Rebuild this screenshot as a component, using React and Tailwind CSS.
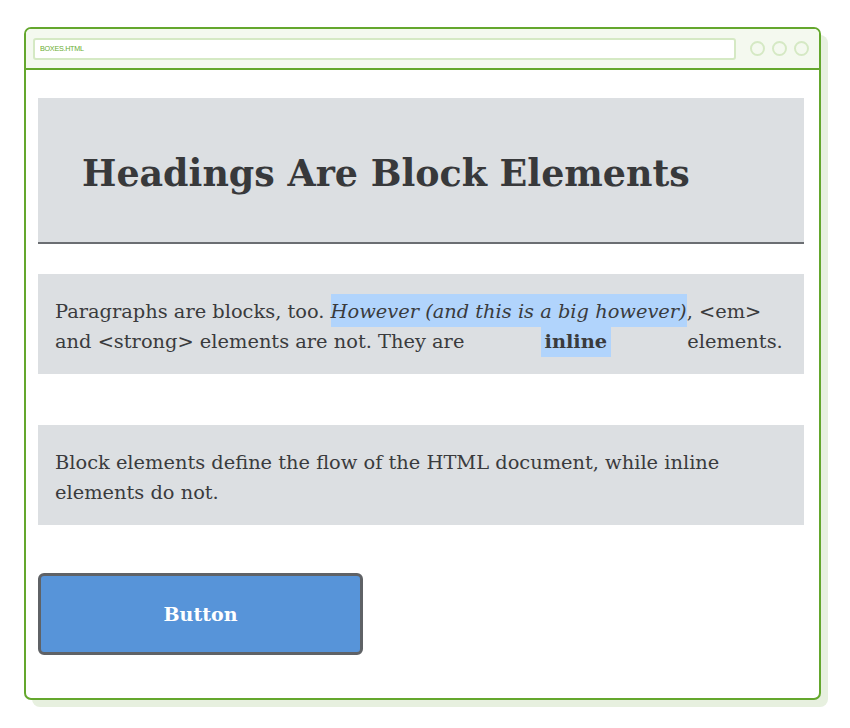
import React from "react";

export default function App() {
  const serif = { fontFamily: '"DejaVu Serif", serif' };
  return (
    <div className="w-[850px] h-[728px] bg-white relative">
      <div className="absolute left-[32px] top-[35px] w-[796px] h-[672px] rounded-[8px] bg-[#e7f0df]" />
      <div className="absolute left-[24px] top-[27px] w-[797px] h-[673px] rounded-[7px] border-2 border-[#64a72d] bg-white flex flex-col overflow-hidden">
        <div className="h-[41px] shrink-0 bg-[#f4f9ef] border-b-2 border-[#64a72d] flex items-center pl-[7px] pr-[10px] gap-[14px]">
          <div className="flex-1 h-[22px] bg-white border-2 border-[#d5e9c4] rounded-[3px] flex items-center pl-[5px]">
            <span className="text-[8px] text-[#6aae2f] tracking-[-0.3px] scale-x-90 origin-left" style={{ fontFamily: '"Liberation Sans", sans-serif' }}>BOXES.HTML</span>
          </div>
          <div className="flex gap-[7px]">
            <div className="w-[15px] h-[15px] rounded-full border-2 border-[#d5e9c4]" />
            <div className="w-[15px] h-[15px] rounded-full border-2 border-[#d5e9c4]" />
            <div className="w-[15px] h-[15px] rounded-full border-2 border-[#d5e9c4]" />
          </div>
        </div>
        <div className="pl-[12px] pr-[15px] pt-[28px] flex flex-col text-[#3a3b3d]" style={serif}>
          <h1 className="h-[146px] bg-[#dcdfe2] border-b-2 border-[#6b6e72] flex items-center pl-[44px] pt-[8px] text-[36.4px] font-bold text-[#38393b]">
            Headings Are Block Elements
          </h1>
          <p className="mt-[30px] h-[100px] bg-[#dcdfe2] px-[17px] pt-[23px] text-[19.4px] leading-[30px]">
            Paragraphs are blocks, too. <em className="bg-[#b1d4fc] pt-[6px] pb-[4px]">However (and this is a big however)</em>, &lt;em&gt; and &lt;strong&gt; elements are not. They are <strong className="bg-[#b1d4fc] px-[4px] py-[4px] mx-[70px]">inline</strong> elements.
          </p>
          <p className="mt-[51px] h-[100px] bg-[#dcdfe2] px-[17px] pt-[23px] text-[19.4px] leading-[30px]">
            Block elements define the flow of the HTML document, while inline elements do not.
          </p>
          <div className="mt-[48px]">
            <button className="w-[325px] h-[82px] bg-[#5794d9] border-[3px] border-[#5f6266] rounded-[6px] text-white font-bold text-[19px]" style={serif}>
              Button
            </button>
          </div>
        </div>
      </div>
    </div>
  );
}
